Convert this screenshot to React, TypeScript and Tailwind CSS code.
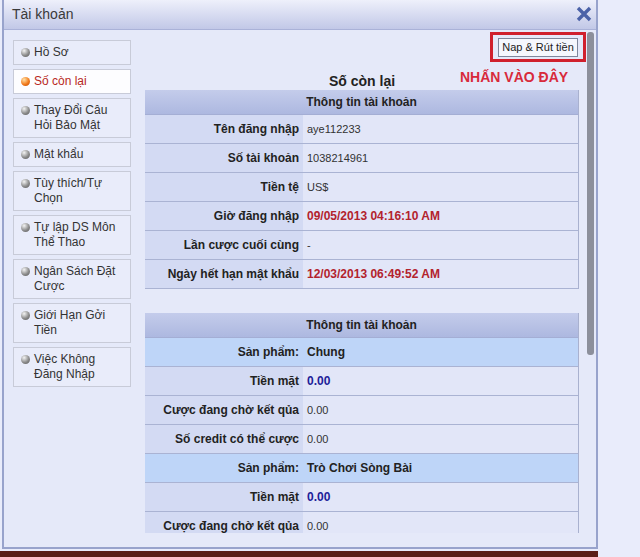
import React from "react";
import clsx from "clsx";

type Row = {
  label: string;
  value: string;
  kind?: "red" | "navy" | "product";
};

const menuItems = [
  "Hồ Sơ",
  "Số còn lại",
  "Thay Đổi Câu Hỏi Bảo Mật",
  "Mật khẩu",
  "Tùy thích/Tự Chọn",
  "Tự lập DS Môn Thể Thao",
  "Ngân Sách Đặt Cược",
  "Giới Hạn Gởi Tiền",
  "Việc Không Đăng Nhập",
];

const accountRows: Row[] = [
  { label: "Tên đăng nhập", value: "aye112233" },
  { label: "Số tài khoản", value: "1038214961" },
  { label: "Tiền tệ", value: "US$" },
  { label: "Giờ đăng nhập", value: "09/05/2013 04:16:10 AM", kind: "red" },
  { label: "Lần cược cuối cùng", value: "-" },
  { label: "Ngày hết hạn mật khẩu", value: "12/03/2013 06:49:52 AM", kind: "red" },
];

const balanceRows: Row[] = [
  { label: "Sản phẩm:", value: "Chung", kind: "product" },
  { label: "Tiền mặt", value: "0.00", kind: "navy" },
  { label: "Cược đang chờ kết qủa", value: "0.00" },
  { label: "Số credit có thể cược", value: "0.00" },
  { label: "Sản phẩm:", value: "Trò Chơi Sòng Bài", kind: "product" },
  { label: "Tiền mặt", value: "0.00", kind: "navy" },
  { label: "Cược đang chờ kết qủa", value: "0.00" },
];

const Bullet: React.FC<{ active?: boolean }> = ({ active }) => (
  <span
    className={clsx(
      "mt-[3px] block h-[9px] w-[9px] shrink-0 rounded-full",
      active
        ? "bg-[radial-gradient(circle_at_35%_30%,#ffe2a8,#f27b1c_55%,#b84400)]"
        : "bg-[radial-gradient(circle_at_35%_30%,#f4f4f4,#8c8c8c_55%,#555)]"
    )}
  />
);

const MenuItem: React.FC<{ text: string; active?: boolean }> = ({ text, active }) => (
  <div
    className={clsx(
      "flex w-[118px] gap-[4px] border border-[#c8cbd8] py-[4px] pl-[7px] pr-[4px] text-[12px] leading-[15px]",
      active ? "bg-[#fdfdff] text-[#b8281e]" : "bg-[#e9ecfa] text-[#333]"
    )}
  >
    <Bullet active={active} />
    <span>{text}</span>
  </div>
);

const TableRow: React.FC<{ row: Row }> = ({ row }) => {
  const product = row.kind === "product";
  return (
    <div className="flex h-[29px] border-b border-[#aab3d3]">
      <div
        className={clsx(
          "flex w-[158px] items-center justify-end pr-[4px] text-[12px] font-bold text-[#222]",
          product ? "bg-[#bed5f8]" : "bg-[#d3daf3]"
        )}
      >
        {row.label}
      </div>
      <div
        className={clsx(
          "flex flex-1 items-center pl-[4px]",
          product ? "bg-[#bed5f8] text-[12px] font-bold text-[#222]" : "bg-[#e2e6f8]",
          row.kind === "red" && "text-[12px] font-bold text-[#b3232d]",
          row.kind === "navy" && "text-[12px] font-bold text-[#1d2199]",
          !row.kind && "text-[11px] text-[#333]"
        )}
      >
        {row.value}
      </div>
    </div>
  );
};

const InfoTable: React.FC<{ rows: Row[] }> = ({ rows }) => (
  <div className="w-[434px] border-r border-[#a9b1cf]">
    <div className="flex h-[25px] items-center justify-center border-b border-[#a4aed4] bg-gradient-to-b from-[#c4cceb] to-[#adb8e0] text-[12px] font-bold text-[#222]">
      Thông tin tài khoản
    </div>
    {rows.map((row, i) => (
      <TableRow key={i} row={row} />
    ))}
  </div>
);

export default function App() {
  return (
    <div className="h-[557px] w-[640px] overflow-hidden bg-[#e9ecfb] font-['Liberation_Sans',Arial,sans-serif]">
      <div className="ml-[2px] flex h-[549px] w-[596px] flex-col border-x-2 border-b-2 border-[#98a3cc] bg-[#e5e9f9]">
        {/* title bar */}
        <div className="flex h-[30px] shrink-0 items-center justify-between border-b border-[#aab2d8] bg-gradient-to-b from-[#eef0fb] to-[#c2c8e7] pl-[8px] pr-[4px]">
          <span className="text-[14px] text-[#3a3a3a]">Tài khoản</span>
          <svg width="16" height="16" viewBox="0 0 16 16" className="mt-[-2px]">
            <path d="M2 2 L14 14 M14 2 L2 14" stroke="#4b62a8" strokeWidth="3.4" />
          </svg>
        </div>

        <div className="flex flex-1">
          {/* side menu */}
          <div className="flex w-[127px] shrink-0 flex-col gap-[4px] pl-[9px] pt-[10px]">
            {menuItems.map((item) => (
              <MenuItem key={item} text={item} active={item === "Số còn lại"} />
            ))}
          </div>

          {/* content */}
          <div className="relative ml-[14px] h-[503px] w-[442px] overflow-hidden pt-[2px]">
            <div className="flex justify-end pr-[1px]">
              <div className="flex h-[30px] items-center border-[3px] border-[#d0202d] px-[5px]">
                <button className="flex h-[19px] w-[80px] items-center justify-center border border-[#7f879c] bg-[#f5f7fd] text-[11px] leading-none text-[#222]">
                  Nap &amp; Rút tiền
                </button>
              </div>
            </div>
            <div className="mt-[10px] w-[434px] text-center text-[14px] font-bold leading-[18px] text-[#222]">
              Số còn lại
            </div>
            <span className="absolute left-[315px] top-[38px] text-[14px] font-bold leading-[18px] text-[#d82a3b]">
              NHẤN VÀO ĐÂY
            </span>

            <InfoTable rows={accountRows} />
            <div className="h-[24px]" />
            <InfoTable rows={balanceRows} />
          </div>

          {/* scrollbar */}
          <div className="w-[9px] pt-[2px]">
            <div className="h-[323px] w-[7px] rounded-[3px] bg-[#8c8f9b]" />
          </div>
        </div>
      </div>
      <div className="mt-[2px] h-[6px] w-[598px] bg-[#5a1e17]" />
    </div>
  );
}
